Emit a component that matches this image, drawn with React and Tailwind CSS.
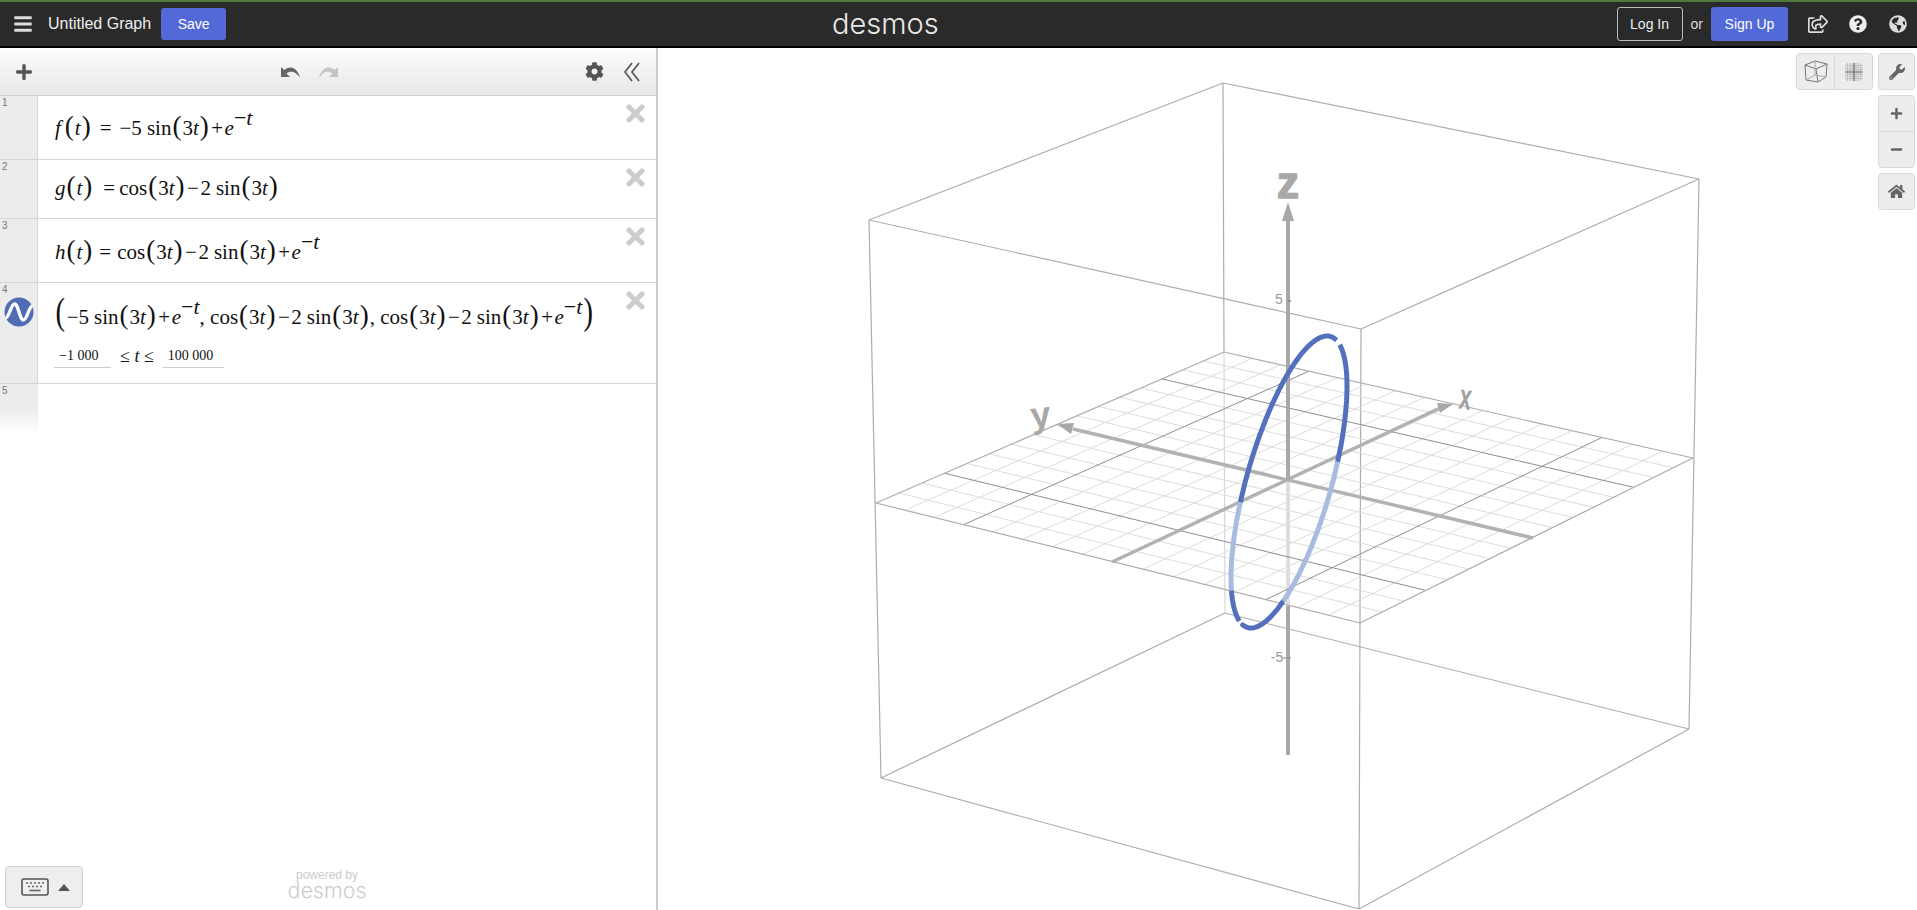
import { FaBars, FaCog, FaGlobeAmericas, FaHome, FaPlus, FaQuestionCircle, FaRegShareSquare, FaTimes, FaWrench, FaMinus } from "react-icons/fa";

const sans = "font-['Liberation_Sans',Arial,sans-serif]";
const logoFont = "font-['Inter','Lato',sans-serif]";

// map (s, t) in the unit square on to the floor of the 3d box
const L = [876, 503];
const F = [1360, 623];
const R = [1693, 458];
const B = [1224, 352];

const project = (s, t) => {
  const dx1 = F[0] - R[0];
  const dx2 = B[0] - R[0];
  const dx3 = L[0] - F[0] + R[0] - B[0];
  const dy1 = F[1] - R[1];
  const dy2 = B[1] - R[1];
  const dy3 = L[1] - F[1] + R[1] - B[1];
  const den = dx1 * dy2 - dx2 * dy1;
  const g = (dx3 * dy2 - dx2 * dy3) / den;
  const h = (dx1 * dy3 - dx3 * dy1) / den;
  const w = g * s + h * t + 1;
  const x = (F[0] - L[0] + g * F[0]) * s + (B[0] - L[0] + h * B[0]) * t + L[0];
  const y = (F[1] - L[1] + g * F[1]) * s + (B[1] - L[1] + h * B[1]) * t + L[1];
  return [x / w, y / w];
};

const gridLines = Array.from({ length: 15 }, (_, i) => i + 1);
const isMajor = (i) => i === 3 || i === 13;

const ellipsePath = (from, to) => {
  const pts = [];
  for (let d = from; d <= to; d += 2) {
    const a = (d * Math.PI) / 180;
    const b = ((d - 49) * Math.PI) / 180;
    pts.push(`${(1289 + 58 * Math.cos(b)).toFixed(1)},${(482 - 146 * Math.cos(a)).toFixed(1)}`);
  }
  return pts.join(" ");
};

const GridLine = ({ a, b, major }) => (
  <line
    x1={a[0]}
    y1={a[1]}
    x2={b[0]}
    y2={b[1]}
    stroke={major ? "#8f8f8f" : "#dcdcdc"}
    strokeWidth="1"
  />
);

const Edge = ({ a, b, color = "#adadad" }) => (
  <line x1={a[0]} y1={a[1]} x2={b[0]} y2={b[1]} stroke={color} strokeWidth="1.2" />
);

const Graph3D = () => {
  const BT = [1223, 83];
  const RT = [1699, 179];
  const LT = [869, 220];
  const FT = [1361, 329];
  const BB = [1225, 613];
  const RB = [1689, 729];
  const LB = [881, 778];
  const FB = [1359, 909];

  return (
    <svg viewBox="658 48 1259 862" className="block h-full w-full">
      <Edge a={BT} b={RT} />
      <Edge a={BT} b={LT} />
      <Edge a={LT} b={FT} />
      <Edge a={RT} b={FT} />
      <Edge a={BB} b={RB} />
      <Edge a={BB} b={LB} />
      <Edge a={LB} b={FB} />
      <Edge a={RB} b={FB} />
      <Edge a={LT} b={LB} />
      <Edge a={RT} b={RB} />
      <Edge a={FT} b={FB} />
      <Edge a={BT} b={[1224, 352]} />
      <Edge a={[1224, 352]} b={BB} color="#d6d6d6" />

      {/* z axis below the floor */}
      <line x1="1288" y1="480" x2="1288" y2="606" stroke="#dedede" strokeWidth="4" />
      <line x1="1288" y1="606" x2="1288" y2="755" stroke="#a8a8a8" strokeWidth="4" />

      {gridLines
        .filter((i) => !isMajor(i))
        .map((i) => (
          <g key={i}>
            <GridLine a={project(i / 16, 0)} b={project(i / 16, 1)} />
            <GridLine a={project(0, i / 16)} b={project(1, i / 16)} />
          </g>
        ))}
      {gridLines.filter(isMajor).map((i) => (
        <g key={i}>
          <GridLine a={project(i / 16, 0)} b={project(i / 16, 1)} major />
          <GridLine a={project(0, i / 16)} b={project(1, i / 16)} major />
        </g>
      ))}
      <Edge a={L} b={B} />
      <Edge a={B} b={R} />
      <Edge a={R} b={F} />
      <Edge a={F} b={L} />

      {/* axes */}
      <line x1="1112" y1="562" x2="1440" y2="408" stroke="#b2b2b2" strokeWidth="3.5" />
      <polygon points="1453,404 1437,403 1440,413" fill="#a8a8a8" />
      <line x1="1533" y1="538" x2="1073" y2="429" stroke="#b2b2b2" strokeWidth="3.5" />
      <polygon points="1057,424 1074,423 1071,434" fill="#a8a8a8" />
      <line x1="1288" y1="221" x2="1288" y2="480" stroke="#a8a8a8" strokeWidth="4" />
      <polygon points="1288,202 1282,221 1294,221" fill="#a8a8a8" />

      <line x1="1288" y1="301" x2="1291" y2="301" stroke="#666" strokeWidth="1" />
      <line x1="1283" y1="658" x2="1291" y2="658" stroke="#888" strokeWidth="1" />

      {/* curve */}
      <polyline points={ellipsePath(82, 146)} fill="none" stroke="#a9bbe0" strokeWidth="5" />
      <polyline points={ellipsePath(222, 262)} fill="none" stroke="#a9bbe0" strokeWidth="5" />
      <polyline points={ellipsePath(20, 82)} fill="none" stroke="#5370bc" strokeWidth="5" />
      <polyline points={ellipsePath(146, 192)} fill="none" stroke="#5370bc" strokeWidth="5" strokeLinecap="round" />
      <polyline points={ellipsePath(198, 222)} fill="none" stroke="#5370bc" strokeWidth="5" />
      <polyline points={ellipsePath(262, 374)} fill="none" stroke="#5370bc" strokeWidth="5" />

      <g fontFamily="'Liberation Sans', Arial, sans-serif">
        <text x="1279" y="304" textAnchor="middle" fontSize="14" fill="#999">5</text>
        <text x="1277" y="662" textAnchor="middle" fontSize="14" fill="#999">-5</text>
        <text x="1288" y="198" textAnchor="middle" fontSize="44" fontWeight="700" fill="#a8a8a8" stroke="#a8a8a8" strokeWidth="1.5">z</text>
        <text x="1041" y="427" textAnchor="middle" fontSize="36" fontWeight="700" fill="#a8a8a8" transform="rotate(-6 1041 420)">y</text>
        <text transform="translate(1464 409) rotate(8) scale(0.6 1)" textAnchor="middle" fontSize="36" fontWeight="700" fill="#a0a0a0">x</text>
      </g>
    </svg>
  );
};

const Var = ({ children }) => <i>{children}</i>;
const Paren = ({ children }) => <span className="mx-[1px] text-[27px] leading-none font-light">{children}</span>;
const BigParen = ({ children }) => <span className="inline-block origin-center scale-x-75 text-[38px] leading-none">{children}</span>;
const Sup = ({ children }) => <span className="align-[10px] text-[22px] leading-none">{children}</span>;
const Op = ({ children }) => <span className="mx-[1.5px]">{children}</span>;

const Sin3t = () => (
  <>
    <span className="ml-[5px]">sin</span>
    <Paren>(</Paren>3<Var>t</Var>
    <Paren>)</Paren>
  </>
);
const Cos3t = () => (
  <>
    cos
    <Paren>(</Paren>3<Var>t</Var>
    <Paren>)</Paren>
  </>
);
const ExpT = () => (
  <>
    <Var>e</Var>
    <Sup>
      −<Var>t</Var>
    </Sup>
  </>
);

const Row = ({ n, height, icon, children }) => (
  <div className={`flex border-b border-[#d5d5d5] ${height}`}>
    <div className="relative w-[38px] shrink-0 border-r border-[#d9d9d9] bg-[#ececec]">
      <span className={`${sans} absolute top-0 left-[2px] text-[10px] leading-[14px] text-[#777]`}>{n}</span>
      {icon}
    </div>
    <div className="relative min-w-0 flex-1 pl-[17px] font-['Liberation_Serif','Times_New_Roman',serif] text-[21px] whitespace-nowrap text-[#111]">
      {children}
      <FaTimes size={27} className="absolute top-[4px] right-[7px] text-[#cccccc]" />
    </div>
  </div>
);

const ParametricIcon = () => (
  <svg viewBox="0 0 30 30" className="absolute top-[14px] left-[4px] h-[30px] w-[30px]">
    <circle cx="15" cy="15" r="14.5" fill="#4f6cb5" />
    <path d="M1.5 21 C5 21 7 7 10.5 7 C14.5 7 15.5 23 19.5 23 C23 23 25 9 28.5 9" fill="none" stroke="#fff" strokeWidth="3.4" />
  </svg>
);

const KeyboardIcon = () => (
  <svg viewBox="0 0 28 18" className="h-[18px] w-[28px]">
    <rect x="1" y="1" width="26" height="16" rx="2" fill="none" stroke="#555" strokeWidth="1.6" />
    <path d="M5 5h2M9 5h2M13 5h2M17 5h2M21 5h2M7 8.5h2M11 8.5h2M15 8.5h2M19 8.5h2" stroke="#666" strokeWidth="1.3" />
    <path d="M8.5 12.5h11" stroke="#666" strokeWidth="1.6" />
  </svg>
);

const CubeIcon = () => (
  <svg viewBox="-1 -1 24 23" className="h-[23px] w-[24px]" fill="none" stroke="#777" strokeWidth="1">
    <path d="M0 4 L10 0 L22 3 L21 16 L13 21 L1 19 Z" />
    <path d="M0 4 L11 8 L22 3 M11 8 L13 21" />
    <path d="M10 0 L10 14 L1 19 M10 14 L21 16" stroke="#aaa" />
  </svg>
);

const GridIcon = () => (
  <svg viewBox="0 0 18 18" className="h-[18px] w-[18px]" fill="none">
    <path d="M0 2.5h18M0 5h18M0 7h18M0 11h18M0 13h18M0 15.5h18M2.5 0v18M5 0v18M7 0v18M11 0v18M13 0v18M15.5 0v18" stroke="#c0c0c0" strokeWidth="1" />
    <path d="M0 9h18M9 0v18" stroke="#666" strokeWidth="1.2" />
  </svg>
);

const UndoIcon = ({ className }) => (
  <svg viewBox="0 0 21 13" className={`h-[13px] w-[21px] ${className}`} fill="currentColor">
    <path d="M1 2 L1 12 L10 12 L6.5 8.5 C10 5.5 15 6 20 12.5 C18 5 12 -1 4.5 5 Z" />
  </svg>
);

const ctrl = "flex items-center justify-center border border-[#d9d9d9] bg-[#ededed] rounded-[4px] text-[#666]";

export default function App() {
  return (
    <div className={`${sans} flex h-[910px] w-full flex-col overflow-hidden bg-white`}>
      <header className="relative flex h-[48px] shrink-0 items-center border-t-2 border-b-2 border-t-[#4d7a3d] border-b-black bg-[#2a2a2a] pr-[10px] pl-[13px] text-white">
        <FaBars size={20} className="text-[#ddd]" />
        <span className="ml-[15px] text-[16px] text-[#eee]">Untitled Graph</span>
        <button className="ml-[10px] h-[32px] w-[65px] rounded-[3px] bg-[#5369d8] text-[14px]">Save</button>
        <span className={`${logoFont} absolute top-[1px] left-[832px] text-[29px] leading-[42px] font-light text-[#e8e8e8]`}>desmos</span>
        <div className="ml-auto flex items-center">
          <button className="h-[34px] w-[66px] rounded-[3px] border border-[#bbb] text-[14px] text-[#eee]">Log In</button>
          <span className="mx-[8px] text-[14px] text-[#ddd]">or</span>
          <button className="h-[34px] w-[77px] rounded-[3px] bg-[#5369d8] text-[14px]">Sign Up</button>
          <FaRegShareSquare size={20} className="ml-[20px] text-[#ddd]" />
          <FaQuestionCircle size={18} className="ml-[21px] text-[#eee]" />
          <FaGlobeAmericas size={18} className="ml-[22px] text-[#ddd]" />
        </div>
      </header>

      <main className="flex min-h-0 flex-1">
        <aside className="relative flex w-[658px] shrink-0 flex-col border-r-2 border-[#ccc]">
          <div className="relative flex h-[48px] shrink-0 items-center border-b border-[#ccc] bg-linear-to-b from-[#fdfdfd] to-[#e7e7e7] pr-[16px] pl-[15px]">
            <FaPlus size={18} className="text-[#555]" />
            <div className="absolute left-[280px] flex gap-[17px]">
              <UndoIcon className="text-[#666]" />
              <UndoIcon className="-scale-x-100 text-[#c4c4c4]" />
            </div>
            <FaCog size={19} className="ml-auto text-[#555]" />
            <svg viewBox="0 0 16 20" className="ml-[20px] h-[20px] w-[16px]" fill="none" stroke="#555" strokeWidth="1.7">
              <path d="M8 1 L1 10 L8 19 M15 1 L8 10 L15 19" />
            </svg>
          </div>

          <Row n="1" height="h-[64px]">
            <div className="pt-[11px]">
              <Var>f</Var>
              <span className="ml-[3px]" />
              <Paren>(</Paren>
              <Var>t</Var>
              <Paren>)</Paren>
              <span className="mx-[8px]">=</span>
              −5
              <Sin3t />
              <Op>+</Op>
              <ExpT />
            </div>
          </Row>
          <Row n="2" height="h-[59px]">
            <div className="pt-[13px]">
              <Var>g</Var>
              <Paren>(</Paren>
              <Var>t</Var>
              <Paren>)</Paren>
              <span className="mr-[4px] ml-[10px]">=</span>
              <Cos3t />
              <Op>−</Op>2
              <Sin3t />
            </div>
          </Row>
          <Row n="3" height="h-[64px]">
            <div className="pt-[12px]">
              <Var>h</Var>
              <Paren>(</Paren>
              <Var>t</Var>
              <Paren>)</Paren>
              <span className="mx-[6px]">=</span>
              <Cos3t />
              <Op>−</Op>2
              <Sin3t />
              <Op>+</Op>
              <ExpT />
            </div>
          </Row>
          <Row n="4" height="h-[101px]" icon={<ParametricIcon />}>
            <div className="-ml-[1px] pt-[9px]">
              <BigParen>(</BigParen>
              −5
              <Sin3t />
              <Op>+</Op>
              <ExpT />, <Cos3t />
              <Op>−</Op>2
              <Sin3t />, <Cos3t />
              <Op>−</Op>2
              <Sin3t />
              <Op>+</Op>
              <ExpT />
              <BigParen>)</BigParen>
            </div>
            <div className="mt-[9px] -ml-[1px] flex items-center text-[14px]">
              <span className="h-[24px] w-[57px] border-b border-[#ccc] pl-[5px] leading-[24px]">−1 000</span>
              <span className="mx-[9px] text-[18px]">
                ≤ <Var>t</Var> ≤
              </span>
              <span className="h-[24px] w-[61px] border-b border-[#ccc] pl-[5px] leading-[24px]">100 000</span>
            </div>
          </Row>
          <div className="flex h-[49px]">
            <div className="relative w-[38px] bg-linear-to-b from-[#ececec] from-50% to-white">
              <span className="absolute top-0 left-[2px] text-[10px] leading-[14px] text-[#777]">5</span>
            </div>
          </div>

          <button className="absolute bottom-[2px] left-[5px] flex h-[42px] w-[78px] items-center gap-[9px] rounded-[4px] border border-[#d2d2d2] bg-[#eee] pl-[15px]">
            <KeyboardIcon />
            <span className="h-0 w-0 border-x-[6px] border-b-[7px] border-x-transparent border-b-[#555]" />
          </button>
          <div className="absolute bottom-[11px] left-[288px] flex w-[78px] flex-col items-center text-[#cccccc]">
            <span className="text-[12px] leading-[12px]">powered by</span>
            <span className={`${logoFont} text-[21.5px] leading-[18px] font-light`}>desmos</span>
          </div>
        </aside>

        <section className="relative min-w-0 flex-1">
          <Graph3D />
          <div className="absolute top-[5px] right-[2px] flex flex-col gap-[5px]">
            <div className={`${ctrl} h-[37px] w-[37px]`}>
              <FaWrench size={16} />
            </div>
            <div className="flex h-[73px] w-[37px] flex-col rounded-[4px] border border-[#d9d9d9] bg-[#ededed] text-[#666]">
              <div className="flex flex-1 items-center justify-center border-b border-[#d9d9d9]">
                <FaPlus size={13} />
              </div>
              <div className="flex flex-1 items-center justify-center">
                <FaMinus size={13} />
              </div>
            </div>
            <div className={`${ctrl} h-[37px] w-[37px]`}>
              <FaHome size={17} />
            </div>
          </div>
          <div className="absolute top-[5px] right-[44px] flex h-[37px] w-[77px] rounded-[4px] border border-[#d9d9d9] bg-[#ededed]">
            <div className="flex flex-1 items-center justify-center border-r border-[#d9d9d9]">
              <CubeIcon />
            </div>
            <div className="flex flex-1 items-center justify-center">
              <GridIcon />
            </div>
          </div>
        </section>
      </main>
    </div>
  );
}
